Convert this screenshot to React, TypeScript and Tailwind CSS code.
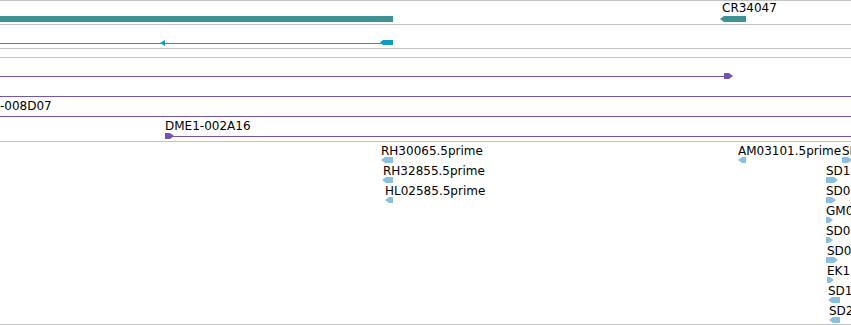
import React from 'react';

type Dir = 'left' | 'right';

interface Feat {
  x: number;
  w: number;
  dir: Dir;
  label: string;
  lx?: number;
}

const EST_COLOR = '#8bbfe2';
const PURPLE = '#7153b1';
const CYAN = '#0e9dc0';
const TEAL = '#409191';

// arrow-shaped glyph drawn at a feature end, x is the genome coordinate in px
const Wedge = ({ x, w, h = 6, dir, color, head = 4, className }: { x: number; w: number; h?: number; dir: Dir; color: string; head?: number; className: string }) => {
  const hd = Math.min(head, w);
  const pts =
    dir === 'left'
      ? `0,${h / 2} ${hd},0 ${w},0 ${w},${h} ${hd},${h}`
      : `0,0 ${w - hd},0 ${w},${h / 2} ${w - hd},${h} 0,${h}`;
  return (
    <svg className={`absolute ${className}`} style={{ left: x }} width={w} height={h} viewBox={`0 0 ${w} ${h}`}>
      <polygon points={pts} fill={color} />
    </svg>
  );
};

const Label = ({ x, text, className }: { x: number; text: string; className: string }) => (
  <span className={`absolute whitespace-nowrap text-[12px] leading-[14px] text-black ${className}`} style={{ left: x }}>
    {text}
  </span>
);

const ESTS: Feat[][] = [
  [
    { x: 381, w: 12, dir: 'left', label: 'RH30065.5prime' },
    { x: 738, w: 8, dir: 'left', label: 'AM03101.5prime' },
    { x: 842, w: 10, dir: 'right', label: 'SD04816.5prime' },
  ],
  [
    { x: 382, w: 11, dir: 'left', label: 'RH32855.5prime', lx: 383 },
    { x: 826, w: 12, dir: 'right', label: 'SD15942.5prime' },
  ],
  [
    { x: 385, w: 8, dir: 'left', label: 'HL02585.5prime' },
    { x: 826, w: 10, dir: 'right', label: 'SD05917.5prime' },
  ],
  [{ x: 826, w: 7, dir: 'right', label: 'GM02651.5prime' }],
  [{ x: 826, w: 7, dir: 'right', label: 'SD06035.5prime' }],
  [{ x: 826, w: 12, dir: 'right', label: 'SD0 1734.5prime', lx: 827 }],
  [{ x: 827, w: 7, dir: 'right', label: 'EK1 60.5prime' }],
  [{ x: 828, w: 12, dir: 'left', label: 'SD1 0213.5prime' }],
  [{ x: 829, w: 11, dir: 'left', label: 'SD2 1147.5prime' }],
];

// clone track rows: line start/end, optional label and end glyph
const CLONES = [
  { from: 0, to: 726, label: '', glyph: { x: 724, w: 9, dir: 'right' as Dir } },
  { from: 0, to: 851, label: '' },
  { from: 0, to: 851, label: '-008D07' },
  { from: 165, to: 851, label: 'DME1-002A16', glyph: { x: 165, w: 9, dir: 'right' as Dir } },
];

export default function App() {
  return (
    <div className="w-[851px] h-[325px] overflow-hidden bg-white font-['DejaVu_Sans',sans-serif]">
      <div className="flex flex-col border-t border-[#c2c2c2]">
        {/* gene track */}
        <div className="relative h-[24px] overflow-hidden border-b border-[#c2c2c2]">
          <div className="mt-[15px] h-[6px] w-[393px] bg-[#409191]" />
          <Label x={722} text="CR34047" className="top-0" />
          <Wedge x={720} w={26} dir="left" color={TEAL} head={4} className="top-[15px]" />
        </div>

        {/* transcript track */}
        <div className="relative h-[24px] overflow-hidden border-b border-[#c2c2c2]">
          <div className="mt-[18px] h-px w-[390px] bg-[#0e9dc0]" />
          <Wedge x={160} w={5} h={6} dir="left" color={CYAN} head={5} className="top-[15px]" />
          <Wedge x={380} w={13} h={5} dir="left" color={CYAN} head={3} className="top-[15px]" />
        </div>

        {/* empty track */}
        <div className="h-[9px] border-b border-[#c2c2c2]" />

        {/* clone track */}
        <div className="flex h-[84px] flex-col overflow-hidden border-b border-[#c2c2c2]">
          {CLONES.map((c, i) => (
            <div key={i} className="relative h-[20px] shrink-0">
              {c.label && <Label x={c.from} text={c.label} className="top-[1px]" />}
              <div className="absolute top-[18px] h-px" style={{ left: c.from, width: c.to - c.from, background: PURPLE }} />
              {c.glyph && <Wedge x={c.glyph.x} w={c.glyph.w} h={6} dir={c.glyph.dir} color={PURPLE} head={4} className="top-[15px]" />}
            </div>
          ))}
        </div>

        {/* EST track */}
        <div className="flex h-[183px] flex-col overflow-hidden border-b border-[#c2c2c2]">
          {ESTS.map((row, i) => (
            <div key={i} className="relative h-[20px] shrink-0">
              {row.map((f) => (
                <React.Fragment key={f.label}>
                  <Label x={f.lx ?? f.x} text={f.label} className="top-[2px]" />
                  <Wedge x={f.x} w={f.w} h={6} dir={f.dir} color={EST_COLOR} head={4} className="top-[15px]" />
                </React.Fragment>
              ))}
            </div>
          ))}
        </div>
      </div>
    </div>
  );
}
